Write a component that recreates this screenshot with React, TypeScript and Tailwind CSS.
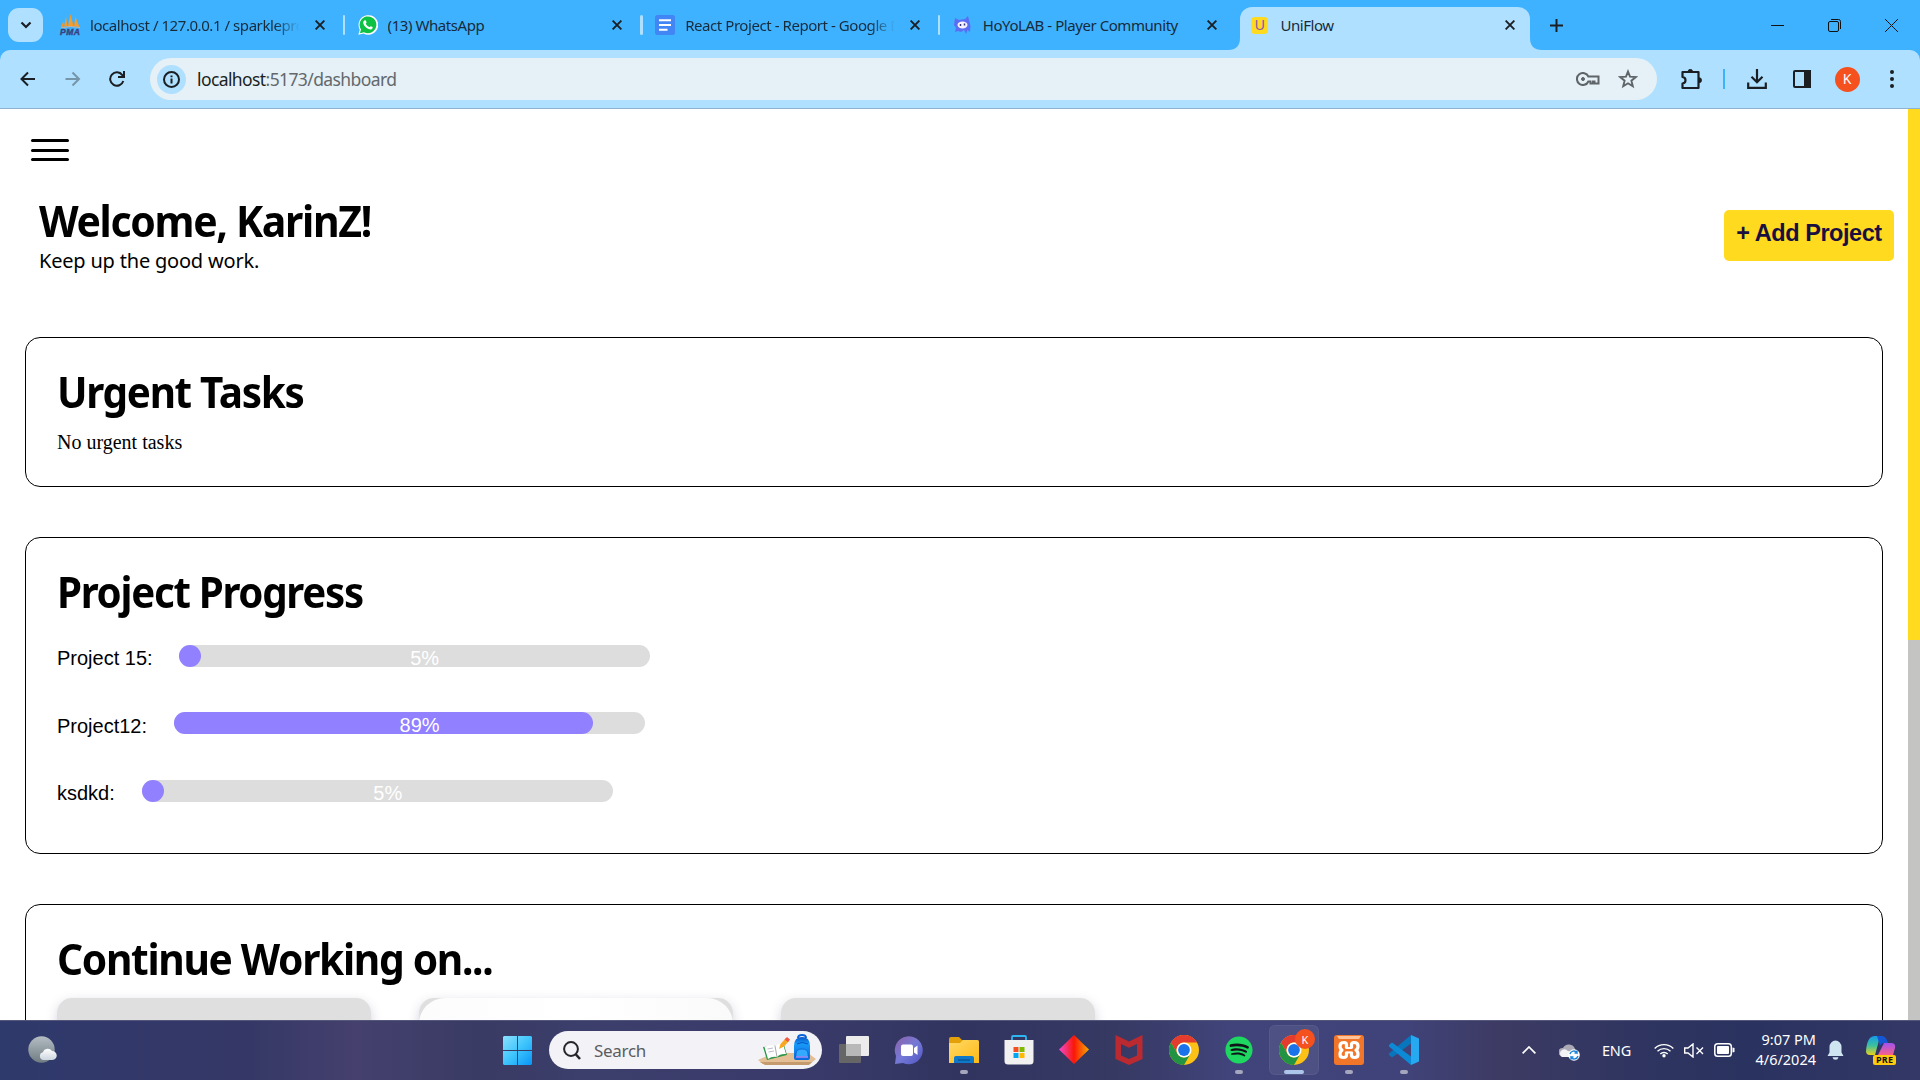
import React from "react";
import { FaSpotify } from "react-icons/fa";

type K = { children?: React.ReactNode; className?: string };

const Close = ({ className = "" }: K) => (
  <svg className={"h-[10px] w-[10px] shrink-0 " + className} viewBox="0 0 10 10" stroke="#1b1f23" strokeWidth="1.9">
    <path d="M.6.6 9.4 9.4M9.4.6.6 9.4" />
  </svg>
);

const PmaIcon = () => (
  <svg viewBox="0 0 20 21" className="-mt-[2px] h-[21px] w-5 overflow-visible">
    <path d="M4 12.500 6 3 7.500 12ZM8 12 10.500 0 13.500 12ZM14 12 15.500 3 19.500 13ZM1 13 3.500 7 3.500 12.500Z" fill="#f89c28" />
    <path d="M1 14Q10 11 20 13.500" stroke="#d8b08c" fill="none" />
    <text x="0" y="20.700" fontSize="8.500" fontWeight="900" fontStyle="italic" fontFamily="Liberation Sans" fill="#39427e" stroke="#39427e" strokeWidth=".4" textLength="20">PMA</text>
  </svg>
);
const DocsIcon = () => (
  <svg viewBox="0 0 20 20" className="h-5 w-5">
    <rect width="20" height="20" rx="2.500" fill="#4285f4" />
    <path d="M4 5.200H16M4 10H16M4 14.800H12.500" stroke="#fff" strokeWidth="2" />
  </svg>
);
const HoyoIcon = () => (
  <svg viewBox="0 0 17 18" className="h-[18px] w-[17px]">
    <path d="M1 2 5 4 11 3 14 0 15.500 6 16.500 10 16 16 13.500 14 12 18 10 14 7 16 4 15 1 16 2 12 0 9Z" fill="#5b6df2" />
    <ellipse cx="8.500" cy="9" rx="5" ry="3.400" fill="#f4f3ff" />
    <path d="M6.500 8V10M10.500 7.500V9.500" stroke="#35367f" strokeWidth="1.500" />
  </svg>
);
const WaIcon = () => (
  <svg viewBox="0 0 20 20" className="h-5 w-5">
    <path d="M.3 19.800 1.800 14.700A9.800 9.800 0 1 1 5.600 18.500Z" fill="#fff" />
    <path d="M1.900 18.200 3 14.500A8.400 8.400 0 1 1 6 17.200Z" fill="#0dc143" />
    <path d="M6.800 5.300C8 5 8 6 8.500 7.300 8.800 8 7.500 8.500 7.900 9.100 8.800 10.700 10 11.600 11.400 12.100 12 12.200 12.300 10.900 13 11.200 14.500 11.900 15 12 14.500 13.200 13.800 14.700 12 14.600 10.500 14 8 13 6 11 5.300 8.500 4.900 7 5.600 5.700 6.800 5.300Z" fill="#fff" />
  </svg>
);

function Tab({ icon, title, fade, sep }: { icon: React.ReactNode; title: string; fade?: boolean; sep?: boolean }) {
  return (
    <div className="flex h-[50px] w-[297.600px] shrink-0 items-center">
      <div className="flex w-5 shrink-0 justify-center">{icon}</div>
      <div className={"ml-[10px] w-[210px] shrink-0 overflow-hidden whitespace-nowrap " + (fade ? "[mask-image:linear-gradient(to_right,#000_88%,transparent_100%)]" : "")}>
        <span className="text-[15px] leading-5 tracking-[-0.440px]">{title}</span>
      </div>
      <Close className="ml-[14.500px]" />
      {sep && <div className="ml-[18px] h-5 w-[2.500px] shrink-0 rounded bg-[#b0e0ff]" />}
    </div>
  );
}

function Browser() {
  return (
    <header className="font-['Noto_Sans'] text-[#172b3a]">
      <div className="flex h-[50px] bg-[#3fb2ff]">
        <div className="flex h-[50px] w-[60px] shrink-0 items-center pl-2">
          <div className="flex h-[34px] w-[35px] items-center justify-center rounded-[11px] bg-[#b0e0ff]">
            <svg viewBox="0 0 12 8" className="h-2 w-3" fill="none" stroke="#1b1f23" strokeWidth="2.200"><path d="M1.500 1.500 6 6 10.500 1.500" /></svg>
          </div>
        </div>
        <Tab icon={<PmaIcon />} title="localhost / 127.0.0.1 / sparklepro" fade sep />
        <Tab icon={<WaIcon />} title="(13) WhatsApp" sep />
        <Tab icon={<DocsIcon />} title="React Project - Report - Google D" fade sep />
        <Tab icon={<HoyoIcon />} title="HoYoLAB - Player Community" />
        <div className="relative -ml-[10px] mt-[7px] flex h-[43px] w-[290px] shrink-0 items-center rounded-t-[12px] bg-[#b0e0ff] pb-[7px]">
          <svg className="absolute -left-3 bottom-0 h-3 w-3" viewBox="0 0 12 12"><path d="M0 12Q12 12 12 0V12Z" fill="#b0e0ff" /></svg>
          <svg className="absolute -right-3 bottom-0 h-3 w-3" viewBox="0 0 12 12"><path d="M12 12Q0 12 0 0V12Z" fill="#b0e0ff" /></svg>
          <div className="ml-[11px] flex h-[17px] w-[17px] items-center justify-center rounded-[4px] bg-[#ffda1e] font-['Liberation_Sans'] text-[14px] leading-none text-[#8a58a8]">U</div>
          <span className="ml-3 w-[225px] text-[15px] leading-5 tracking-[-0.440px]">UniFlow</span>
          <Close />
        </div>
        <svg className="ml-[19.500px] mt-[19px] h-[13px] w-[13px]" viewBox="0 0 13 13" stroke="#1b1f23" strokeWidth="2"><path d="M0 6.500H13M6.500 0V13" /></svg>
        <div className="ml-auto flex h-[50px] items-center gap-[44px] pr-[22px]">
          <svg className="h-[13px] w-[13px]" viewBox="0 0 13 13" stroke="#111"><path d="M0 6.500H13" /></svg>
          <svg className="h-[13px] w-[13px]" viewBox="0 0 13 13" stroke="#111" fill="none"><rect x=".5" y="2.500" width="10" height="10" rx="1.500" /><path d="M3 .5H10.500Q12.500.5 12.500 2.500V10" /></svg>
          <svg className="h-[13px] w-[13px]" viewBox="0 0 13 13" stroke="#111"><path d="M0 0 13 13M13 0 0 13" /></svg>
        </div>
      </div>
      <div className="bg-[#3fb2ff]">
        <div className="flex h-[59px] items-center rounded-t-[10px] border-b border-[#8fb2d3] bg-[#b0e0ff] pl-5">
          <svg className="h-4 w-4" viewBox="0 0 16 16" fill="none" stroke="#1b1f23" strokeWidth="2"><path d="M15 8H1.500M8 1.500 1.500 8 8 14.500" /></svg>
          <svg className="ml-[29px] h-4 w-4" viewBox="0 0 16 16" fill="none" stroke="#7795a8" strokeWidth="2"><path d="M.5 8H14M7.500 1.500 14 8 7.500 14.500" /></svg>
          <svg className="ml-[28px] h-4 w-4" viewBox="0 0 16 16" fill="none" stroke="#1b1f23" strokeWidth="2"><path d="M14.300 10A6.700 6.700 0 1 1 13.300 4.100L15 6M15 0V6H9" /></svg>
          <div className="ml-[25px] flex h-[42px] w-[1507px] shrink-0 items-center rounded-full bg-[#e5f1f6] pl-[7px]">
            <div className="flex h-[29px] w-[29px] items-center justify-center rounded-full bg-[#b0e0ff]">
              <svg className="h-[17px] w-[17px]" viewBox="0 0 17 17" fill="none" stroke="#1b1f23" strokeWidth="2"><circle cx="8.500" cy="8.500" r="7.500" /><path d="M8.500 7.500V12.500M8.500 4.500V6.200" /></svg>
            </div>
            <div className="ml-[11px] text-[17.500px] leading-6 tracking-[-0.600px] text-[#63686d]"><span className="text-[#1b1f23]">localhost</span>:5173/dashboard</div>
            <svg className="ml-auto h-[14px] w-6" viewBox="0 0 24 14" fill="none" stroke="#5f6468" strokeWidth="2"><path d="M12.400 4.500H22.500V11.500H18.500V9.500H17V11.500H14.500V9.500H12.400A6 6 0 1 1 12.400 4.500Z" /><circle cx="7" cy="7" r="1.500" fill="#5f6468" strokeWidth="1" /></svg>
            <svg className="ml-[18px] mr-[19px] h-5 w-5" viewBox="0 0 20 20" fill="none" stroke="#5f6468" strokeWidth="1.900"><path d="M10 2.500 12 7.600 17.800 8 13.400 11.700 14.800 17.300 10 14.300 5.200 17.300 6.600 11.700 2.200 8 8 7.600Z" /></svg>
          </div>
          <svg className="ml-[23.500px] h-[21px] w-[21px]" viewBox="0 0 21 21" fill="none" stroke="#1b1f23" strokeWidth="2.200"><path d="M1.500 3H17.500V19H1.500V14.500Q4.500 14 4.500 11.200T1.500 8Z" strokeLinejoin="round" /><path d="M7 3Q7 .3 9.300.3T11.600 3Z" fill="#1b1f23" strokeWidth=".8" /><path d="M17.500 8.500Q20.700 8.500 20.700 11.200T17.500 14Z" fill="#1b1f23" strokeWidth=".5" /></svg>
          <div className="ml-[21px] h-5 w-[2px] bg-[#3fb2ff]" />
          <svg className="ml-[22.500px] h-5 w-5" viewBox="0 0 20 20" fill="none" stroke="#1b1f23" strokeWidth="2.200"><path d="M10 0V13M4.500 7.800 10 13.300 15.500 7.800M1.200 13.500V18.800H18.800V13.500" /></svg>
          <svg className="ml-[26px] h-[18px] w-[18px]" viewBox="0 0 18 18" fill="none" stroke="#1b1f23" strokeWidth="2"><rect x="1" y="1" width="16" height="16" rx="1" /><path d="M12 1H17V17H12Z" fill="#1b1f23" /></svg>
          <div className="ml-[23.500px] flex h-[25px] w-[25px] items-center justify-center rounded-full bg-[#f4511e] text-[14px] leading-none text-white">K</div>
          <svg className="ml-[30.500px] h-[18px] w-1" viewBox="0 0 4 18" fill="#1b1f23"><circle cx="2" cy="2" r="2" /><circle cx="2" cy="9" r="2" /><circle cx="2" cy="16" r="2" /></svg>
        </div>
      </div>
    </header>
  );
}

const Heading = ({ children, className = "" }: K) => (
  <h2 className={"w-fit origin-left whitespace-nowrap pt-px font-['Noto_Sans'] text-[43px] font-bold leading-[50px] tracking-[-1.400px] text-black " + className}>{children}</h2>
);

const projects = [
  { name: "Project 15:", pct: 5, gap: "ml-[26px]" },
  { name: "Project12:", pct: 89, gap: "ml-[26.500px]" },
  { name: "ksdkd:", pct: 5, gap: "ml-[27px]" },
];

function Dashboard() {
  return (
    <main className="flex h-[911px] overflow-hidden bg-white">
      <div className="min-w-0 flex-1 pl-[25px] pr-[25px]">
        <div className="ml-[6px] mt-[30px] flex h-[24px] w-[38px] flex-col gap-[6.500px]">
          <div className="h-[3px] shrink-0 rounded bg-black" /><div className="h-[3px] shrink-0 rounded bg-black" /><div className="h-[3px] shrink-0 rounded bg-black" />
        </div>
        <div className="mt-[32px] flex h-[142px] items-start justify-between">
          <div className="ml-[14px]">
            <Heading className="scale-x-[0.953]">Welcome, KarinZ!</Heading>
            <p className="mt-[2px] font-['Noto_Sans'] text-[20px] leading-[26px] tracking-[-0.200px] text-black">Keep up the good work.</p>
          </div>
          <button className="-mr-[11px] mt-[15px] h-[51px] w-[170px] whitespace-nowrap rounded-[5px] bg-[#ffda1e] pb-[3px] font-['Liberation_Sans'] text-[23.500px] font-bold tracking-[-0.450px] text-[#1a1040]">+ Add Project</button>
        </div>
        <section className="h-[150px] rounded-[15px] border border-black pl-[31px] pt-[28px]">
          <Heading className="scale-x-[0.94]">Urgent Tasks</Heading>
          <p className="mt-[13px] font-['Liberation_Serif'] text-[20px] leading-6 text-black">No urgent tasks</p>
        </section>
        <section className="mt-[50px] h-[317px] rounded-[15px] border border-black pl-[31px] pt-[28px]">
          <Heading className="scale-x-[0.937]">Project Progress</Heading>
          <div className="mt-[27.500px] flex flex-col gap-[43.500px] font-['Liberation_Sans'] text-[20px]">
            {projects.map((p) => (
              <div key={p.name} className="flex h-6 items-center text-black">
                <span className="pt-[3px] leading-6">{p.name}</span>
                <div className={"-mt-[2px] flex h-[22px] w-[471.500px] rounded-full bg-[#ddd] " + p.gap}>
                  <div className="h-full min-w-[22px] rounded-full bg-[#9180ff]" style={{ width: p.pct === 5 ? 22 : `${p.pct}%` }} />
                  <span className="absolute w-[492px] pt-[1px] text-center leading-6 text-white">{p.pct}%</span>
                </div>
              </div>
            ))}
          </div>
        </section>
        <section className="mt-[50px] h-[317px] rounded-[15px] border border-black pl-[31px] pt-[28px]">
          <Heading className="scale-x-[0.947]">Continue Working on...</Heading>
          <div className="mt-[14px] flex gap-[48.500px]">
            {[0, 1, 2].map((i) => (
              <div key={i} className="h-[200px] w-[313.500px] rounded-[15px] bg-[#dfdfdf] shadow-[0_4px_12px_rgba(60,50,110,0.22)]">
                {i === 1 && <div className="h-full rounded-[26px] bg-gradient-to-r from-[#fcfcfc] via-white to-[#fafafa]" />}
              </div>
            ))}
          </div>
        </section>
      </div>
      <div className="w-3 bg-[#c4c4c2]"><div className="h-[531px] bg-[#ffda1e]" /></div>
    </main>
  );
}

const Chrome = () => (
  <svg viewBox="0 0 30 30" className="h-[30px] w-[30px]">
    <circle cx="15" cy="15" r="15" fill="#fbc116" />
    <path d="M2 7.500A15 15 0 0 1 28 7.500H15A7.500 7.500 0 0 0 8.500 18.700Z" fill="#e33b2e" />
    <path d="M2 7.500A15 15 0 0 0 15 30L21.500 18.700A7.500 7.500 0 0 1 8.500 18.700Z" fill="#229342" />
    <circle cx="15" cy="15" r="7.500" fill="#fff" /><circle cx="15" cy="15" r="5.900" fill="#1a73e8" />
  </svg>
);

const AppCell = ({ children, dot, active }: K & { dot?: boolean; active?: boolean }) => (
  <div className="relative flex h-[60px] w-[55px] items-center justify-center">
    {active && <div className="absolute inset-x-[2.500px] bottom-[5px] top-[5px] rounded-md border border-white/5 bg-white/[0.07]" />}
    <div className="relative flex h-[30px] w-[30px] items-center justify-center">{children}</div>
    {dot && <div className={"absolute bottom-[6px] h-1 rounded-full " + (active ? "w-5 bg-[#abc6ea]" : "w-2 bg-[#a5a6bd]")} />}
  </div>
);

function Taskbar() {
  return (
    <footer className="flex h-[60px] items-center border-t border-[#55577a] bg-[linear-gradient(90deg,#2e3a6b_0%,#33386a_7%,#353866_13%,#45406e_18.500%,#393b64_25%,#3c3e6c_31%,#393a69_42%,#31345f_50%,#363962_58%,#40447a_64%,#40437a_73%,#3d3b64_78%,#2f3560_85%,#2a325f_91%,#333866_100%)] pb-[1px] font-['Noto_Sans'] text-white">
      <svg className="ml-7 h-7 w-[29px]" viewBox="0 0 29 28">
        <defs><linearGradient id="moon" x2="0" y2="1"><stop stopColor="#b4bdc4" /><stop offset="1" stopColor="#707c82" /></linearGradient><linearGradient id="cl" x2="0" y2="1"><stop stopColor="#fff" /><stop offset="1" stopColor="#cdd5df" /></linearGradient></defs>
        <circle cx="13.500" cy="13.500" r="13.200" fill="url(#moon)" />
        <path d="M15 24A4 4 0 0 1 15 16.200 5 5 0 0 1 24 15 4.500 4.500 0 0 1 24.500 24Z" fill="url(#cl)" />
      </svg>
      <svg className="ml-[446px] h-[29px] w-[29px]" viewBox="0 0 29 29">
        <defs><linearGradient id="win" x2="1" y2="1"><stop stopColor="#8ce0fd" /><stop offset=".5" stopColor="#3fc5fc" /><stop offset="1" stopColor="#0795f7" /></linearGradient></defs>
        <path d="M1 0H14V14H0V1ZM15 0H28L29 1V14H15ZM0 15H14V29H1L0 28ZM15 15H29V28L28 29H15Z" fill="url(#win)" />
      </svg>
      <div className="ml-[17px] flex h-[38px] w-[273px] items-center rounded-full bg-[#f3f3f7] pl-[14px]">
        <svg className="h-[19px] w-[18px]" viewBox="0 0 18 19" fill="none" stroke="#26262a" strokeWidth="2"><circle cx="8" cy="8" r="6.900" /><path d="M12.500 13 17 18" strokeWidth="2.600" /></svg>
        <span className="ml-[13px] pt-[1px] text-[17px] leading-6 tracking-[-0.300px] text-[#5c5c60]">Search</span>
        <svg className="ml-auto mr-[6px] h-[32px] w-[58px]" viewBox="0 0 58 32">
          <defs><linearGradient id="bag" x2="0" y2="1"><stop stopColor="#0754c8" /><stop offset=".3" stopColor="#189af8" /><stop offset="1" stopColor="#0869dc" /></linearGradient></defs>
          <path d="M0 26 15 19H50L58 25 52 30H5Z" fill="#e4bf95" /><path d="M2 28 54 28 51 31H7Z" fill="#c59a6c" />
          <path d="M5 13 9 26 29 21 26 11Z" fill="#2b9747" /><path d="M6.500 13Q12 10 17 12 21 9 25 10L28 20Q22 19.500 19 23 14 22 10 25Z" fill="#fff" /><path d="M17 12 19 23" stroke="#aaa" /><path d="M9.500 15 15 14M10.500 18 16 17" stroke="#bbc" />
          <path d="M21 15 22.500 10 28 4 31 7 26 12.500Z" fill="#f7a823" /><path d="M26.500 5.500 29 3 32 5.500 30 8Z" fill="#f25744" />
          <path d="M40 4Q40 1 44 1T48 4" fill="none" stroke="#0b63d6" strokeWidth="2" /><path d="M36 12Q36 3 44 3T52 12V24Q52 26 50 26H38Q36 26 36 24Z" fill="url(#bag)" />
          <path d="M38 20Q38 15 44 15T50 20V23H38Z" fill="#35a8ff" stroke="#0a5ac9" strokeWidth=".7" /><path d="M38 23H50" stroke="#a58bf8" strokeWidth="1.500" /><path d="M39 10Q44 7 50 10" fill="none" stroke="#0755c5" />
        </svg>
      </div>
      <div className="ml-[4.500px] flex">
        <AppCell><svg viewBox="0 0 30 30" className="h-[30px] w-[30px]"><rect x="0" y="9" width="22" height="19" rx="1" fill="#666" /><rect x="7" y="1" width="23" height="20" rx="1" fill="#ececec" /><path d="M7 9H22V21H7Z" fill="#b8b8b8" /></svg></AppCell>
        <AppCell><svg viewBox="0 0 30 30" className="h-[30px] w-[30px]"><defs><linearGradient id="chat" x2="1" y2="1"><stop stopColor="#8e62a8" /><stop offset=".5" stopColor="#7579d6" /><stop offset="1" stopColor="#4f55c4" /></linearGradient></defs><path d="M1 29 2 21A14 14 0 1 1 9 28Z" fill="url(#chat)" /><rect x="7" y="9.500" width="12" height="11.500" rx="2" fill="#fff" /><path d="M20 13 23.500 10.500V20L20 17.500Z" fill="#fff" /></svg></AppCell>
        <AppCell dot><svg viewBox="0 0 30 30" className="h-[30px] w-[30px]"><defs><linearGradient id="fold" x2="1" y2="1"><stop stopColor="#ffd968" /><stop offset="1" stopColor="#ffb914" /></linearGradient></defs><path d="M0 4Q0 2 2 2H10L13 5H28Q30 5 30 7V12H0Z" fill="#e3a008" /><path d="M0 8H11L14 5H28Q30 5 30 7V28H0Z" fill="url(#fold)" /><path d="M5 28V23Q5 21 7 21H23Q25 21 25 23V28Z" fill="#0f78c9" /><path d="M9 25H21" stroke="#075290" strokeWidth="1.300" /></svg></AppCell>
        <AppCell><svg viewBox="0 0 30 30" className="h-[30px] w-[30px]"><path d="M8 7V2Q8 1 9 1H21Q22 1 22 2V7" fill="none" stroke="#2db6ef" strokeWidth="1.800" /><path d="M.5 5H29.500V26Q29.500 29.500 26 29.500H4Q.5 29.500.5 26Z" fill="#f1f1f1" /><path d="M9.500 12H14.500V17H9.500Z" fill="#f25022" /><path d="M15.500 12H20.500V17H15.500Z" fill="#7fba00" /><path d="M9.500 18H14.500V23H9.500Z" fill="#00a4ef" /><path d="M15.500 18H20.500V23H15.500Z" fill="#ffb900" /></svg></AppCell>
        <AppCell><svg viewBox="0 0 30 30" className="h-[30px] w-[30px]"><defs><linearGradient id="dia"><stop stopColor="#f04bd0" /><stop offset=".5" stopColor="#fb1708" /><stop offset="1" stopColor="#f6a800" /></linearGradient></defs><path d="M15 0 30 14.500 15 29 0 14.500Z" fill="url(#dia)" /></svg></AppCell>
        <AppCell><svg viewBox="0 0 30 30" className="h-[30px] w-[30px]"><path d="M1.500 0 15 6.500 28.500 0V24L15 30 1.500 24ZM7 9V20.500L15 24 23 20.500V9L15 12.800Z" fill="#bb2a30" fillRule="evenodd" /></svg></AppCell>
        <AppCell><Chrome /></AppCell>
        <AppCell dot><div className="h-6 w-6 shrink-0 rounded-full bg-[#101418]" /><FaSpotify className="absolute left-[1px] top-[1px] h-7 w-7 text-[#1ed760]" /></AppCell>
        <AppCell dot active><Chrome /><div className="absolute -right-[6px] -top-[6px] flex h-5 w-5 items-center justify-center rounded-full bg-[#f4511e] text-[11px] leading-none text-white">K</div></AppCell>
        <AppCell dot>
          <svg viewBox="0 0 30 30" className="h-[30px] w-[30px]">
            <rect width="30" height="30" rx="3" fill="#f2762a" /><path d="M3 1H27L25 4H5Z" fill="#ffc49a" />
            <path d="M11.500 13.500H18.500M11.500 17H18.500M12.500 13V9.500Q12.500 7.500 10 7.500 6 7.500 6 11 6 14 8 15.200 6 16.500 6 19.500 6 22.500 9.500 22.500 12.500 22.500 12.500 20V17M17.500 13V9.500Q17.500 7.500 20 7.500 24 7.500 24 11 24 14 22 15.200 24 16.500 24 19.500 24 22.500 20.500 22.500 17.500 22.500 17.500 20V17" fill="none" stroke="#fff" strokeWidth="3.200" strokeLinejoin="round" />
            <path d="M11 15.200H19" stroke="#f2762a" strokeWidth="2.400" />
          </svg>
        </AppCell>
        <AppCell dot><svg viewBox="0 0 30 30" className="h-[30px] w-[30px]"><path d="M22 8.500 3 22.500 0 20V18.500L22 0Z" fill="#0876bd" /><path d="M22 21.500 3 7.500 0 10V11.500L22 30Z" fill="#0d8ad6" /><path d="M22 0 30 3.500V26.500L22 30Z" fill="#27a9f2" /></svg></AppCell>
      </div>
      <div className="ml-auto flex items-center">
        <svg className="h-2 w-[14px]" viewBox="0 0 14 8" fill="none" stroke="#fff" strokeWidth="1.700"><path d="M.6 7.400 7 1 13.400 7.400" /></svg>
        <svg className="ml-[23px] mt-1 h-[18px] w-[21px]" viewBox="0 0 21 18"><path d="M3 13A4 4 0 0 1 4 5 6.500 6.500 0 0 1 16 6L17 9 9 13Z" fill="#aaa9b5" /><path d="M3 14A4 4 0 0 1 3 7Q6 5 9 8L13 9V14Z" fill="#f3f3f6" /><circle cx="15" cy="12" r="5.800" fill="#fff" /><path d="M11 11A4 4 0 0 1 18 9.500V7.500M18 10H15.500M19 13A4 4 0 0 1 12 14.500V16.500M12 14H14.500" fill="none" stroke="#1683d8" strokeWidth="1.400" /></svg>
        <span className="ml-[22px] w-[30px] text-[14.500px] leading-5 tracking-[-0.200px]">ENG</span>
        <svg className="ml-[22px] h-[16px] w-5" viewBox="0 0 20 16" fill="none" stroke="#fff" strokeWidth="1.400"><path d="M.7 6.500A13 13 0 0 1 19.300 6.500M3.500 9.300A9.200 9.200 0 0 1 16.500 9.300M6.300 12A5.300 5.300 0 0 1 13.700 12" /><circle cx="10" cy="13.800" r="1.700" fill="#fff" stroke="none" /></svg>
        <svg className="ml-[10px] h-[15px] w-5" viewBox="0 0 20 15" fill="none" stroke="#fff" strokeWidth="1.400"><path d="M.7 5H4L9 1V14L4 10H.7ZM12.500 4.500 19 11M19 4.500 12.500 11" /></svg>
        <svg className="ml-[10px] h-[14px] w-[21px]" viewBox="0 0 21 14"><rect x=".8" y=".8" width="16.500" height="12.400" rx="2.800" fill="none" stroke="#fff" strokeWidth="1.500" /><rect x="3" y="3" width="12" height="8" rx="1" fill="#fff" /><path d="M18.500 4.500 20.500 5V9L18.500 9.500Z" fill="#fff" /></svg>
        <div className="mb-[2px] ml-[15px] w-[66px] text-right text-[14.500px] leading-5"><div>9:07 PM</div><div>4/6/2024</div></div>
        <svg className="ml-[11px] h-[20px] w-[17px]" viewBox="0 0 17 20" fill="#cfe6f2"><path d="M.5 16 2.500 12.500V7A6 6.500 0 0 1 14.500 7V12.500L16.500 16ZM5.500 17.300H11.500Q11 19.800 8.500 19.800T5.500 17.300Z" /></svg>
        <svg className="ml-[21.500px] mr-[24.500px] h-[30px] w-[30px]" viewBox="0 0 30 30">
          <defs><linearGradient id="c1" x2="0" y2="1"><stop stopColor="#159ce8" /><stop offset=".5" stopColor="#3cc1a0" /><stop offset="1" stopColor="#e8d219" /></linearGradient><linearGradient id="c2" x2="0" y2="1"><stop stopColor="#a052ee" /><stop offset="1" stopColor="#f8618a" /></linearGradient></defs>
          <path d="M9 1H17Q13 3 12 9L9 20H4Q0 20 0 16 1 1 9 1Z" fill="url(#c1)" /><path d="M11 1H16Q20 1 22 8H18Q15 8 14 11Z" fill="#1556d5" /><path d="M18 8H25Q30 8 29 13L27 20H12Z" fill="url(#c2)" />
          <rect x="7" y="20" width="23" height="10" rx="2" fill="#ffc90e" /><text x="10" y="28.300" fontSize="9" fontWeight="700" fontFamily="Open Sans" fill="#111" textLength="17">PRE</text>
        </svg>
      </div>
    </footer>
  );
}

export default function App() {
  return (
    <div className="flex h-[1080px] w-[1920px] flex-col overflow-hidden bg-white">
      <Browser />
      <Dashboard />
      <Taskbar />
    </div>
  );
}
